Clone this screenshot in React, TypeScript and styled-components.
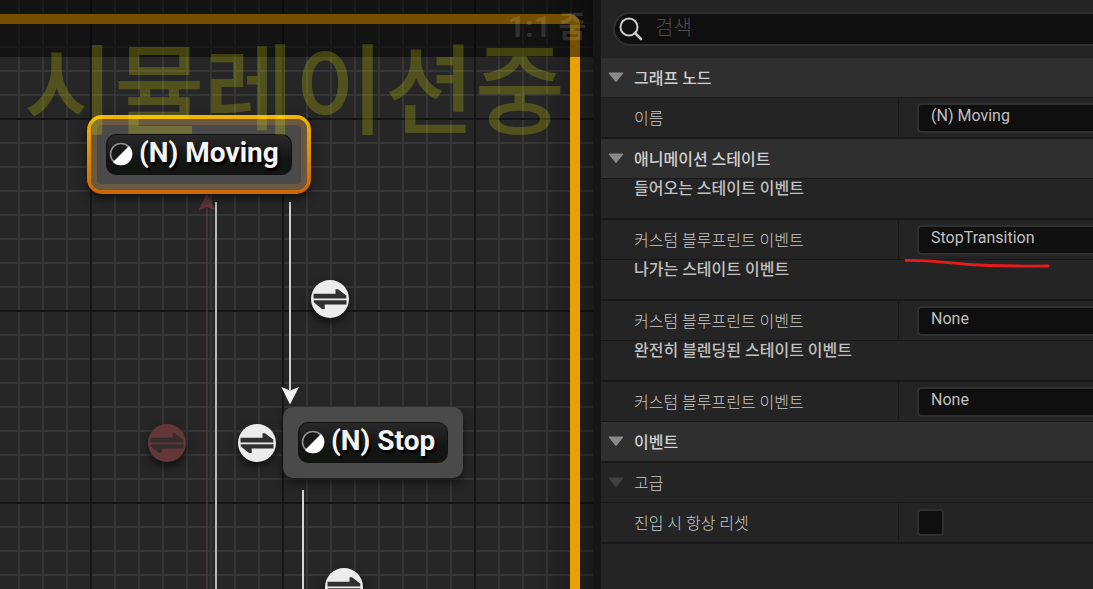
import React, { useState } from "react";
import styled, { createGlobalStyle, css } from "styled-components";

const GlobalStyle = createGlobalStyle`
  *, *::before, *::after { box-sizing: border-box; }
  body {
    margin: 0;
    background: #242424;
    color: #c0c0c0;
    font-family: Roboto, "Noto Sans CJK KR", sans-serif;
    font-size: 16px;
    overflow: hidden;
  }
  button, input { font: inherit; color: inherit; }
`;

const Editor = styled.div`
  display: grid;
  grid-template-columns: minmax(0, 593fr) 8px minmax(0, 492fr);
  height: 100vh;
`;

const Splitter = styled.div`
  background: #161616;
`;

/* ---------- Graph ---------- */

const Graph = styled.main`
  position: relative;
  overflow: hidden;
  background-color: #262626;
  background-image:
    linear-gradient(to left, rgba(0, 0, 0, 0.3), transparent 60px),
    linear-gradient(90deg, #161616 2px, transparent 2px),
    linear-gradient(#161616 2px, transparent 2px),
    linear-gradient(90deg, #353535 2px, transparent 2px),
    linear-gradient(#353535 2px, transparent 2px);
  background-size: 100% 100%, 192px 192px, 192px 192px, 24px 24px, 24px 24px;
  background-position: 0 0, 90px 0, 0 118px, 18px 0, 0 22px;
`;

const SimulationFrame = styled.div`
  position: absolute;
  inset: 14px 13px -20px -20px;
  border: 10px solid #eba000;
  border-radius: 10px;
`;

const TitleShade = styled.header`
  position: absolute;
  inset: 0 0 auto 0;
  height: 57px;
  padding: 7px 7px;
  background: rgba(0, 0, 0, 0.5);
  text-align: right;
`;

const ZoomLabel = styled.span`
  font: 700 30px/40px Roboto, "Noto Sans CJK KR", sans-serif;
  color: rgba(255, 255, 255, 0.14);
`;

const SimulationLabel = styled.div`
  position: absolute;
  top: 28px;
  right: 28px;
  font: 500 98px/110px "Noto Sans CJK KR", sans-serif;
  color: rgba(255, 255, 0, 0.2);
  white-space: nowrap;
  pointer-events: none;
`;

const Wires = styled.svg`
  position: absolute;
  inset: 0;
  width: 100%;
  height: 100%;
`;

const NodeShell = styled.div<{ $x: number; $y: number; $selected?: boolean }>`
  position: absolute;
  left: ${(p) => p.$x}px;
  top: ${(p) => p.$y}px;
  border-radius: 10px;
  box-shadow: 0 5px 10px rgba(0, 0, 0, 0.5);
  ${(p) =>
    p.$selected &&
    css`
      padding: 4px;
      border-radius: 15px;
      background: linear-gradient(#f3b400, #cc6600);
    `}
`;

const NodeBody = styled.div<{ $selected?: boolean }>`
  padding: 15px;
  border-radius: 10px;
  background: #4a4a4a;
  ${(p) => p.$selected && css`box-shadow: inset 0 0 0 6px #6a5840;`}
`;

const NodeTitle = styled.div`
  display: flex;
  align-items: center;
  gap: 6px;
  height: 41px;
  padding: 0 12px 0 2px;
  border-radius: 10px;
  border: 1px solid #121212;
  background: linear-gradient(#282828, #141614 60%, #121412);
  color: #f4f4f4;
  font: 700 28px/36px Roboto, sans-serif;
  text-shadow: 2px 3px 2px #000;
  white-space: nowrap;

  span { padding-bottom: 4px; }
  svg { margin-bottom: 2px; }
`;

const TransitionButton = styled.button<{ $x: number; $y: number; $muted?: boolean }>`
  position: absolute;
  left: ${(p) => p.$x}px;
  top: ${(p) => p.$y}px;
  width: 38px;
  height: 38px;
  padding: 0;
  border: 0;
  border-radius: 50%;
  background: ${(p) => (p.$muted ? "#643838" : "#ececec")};
  color: ${(p) => (p.$muted ? "#352d2d" : "#303030")};
  box-shadow: 0 5px 9px rgba(0, 0, 0, 0.55);

  svg { display: block; }
`;

/* ---------- Details ---------- */

const Details = styled.aside`
  overflow: hidden;
  background: #242424;
`;

const SearchBar = styled.div`
  height: 58px;
  padding: 12px 0 0 12px;
`;

const SearchBox = styled.label`
  display: flex;
  align-items: center;
  gap: 12px;
  height: 34px;
  margin-right: -20px;
  padding-left: 4px;
  border: 2px solid #303030;
  border-radius: 17px;
  background: #0f0f0f;
`;

const SearchInput = styled.input`
  flex: 1;
  min-width: 0;
  height: 28px;
  padding: 0 0 2px;
  border: 0;
  outline: 0;
  background: none;
  font-size: 20px;
  font-weight: 300;
  &::placeholder { color: #4c4c4c; opacity: 1; }
`;

const SectionHeader = styled.button<{ $thick?: boolean; $sub?: boolean }>`
  display: flex;
  align-items: center;
  gap: 10px;
  width: 100%;
  height: ${(p) => (p.$thick ? 41 : 40)}px;
  padding: 0 0 2px 7px;
  border: 0;
  border-bottom: ${(p) => (p.$thick ? 2 : 1)}px solid #191919;
  background: ${(p) => (p.$sub ? "#242424" : "#2f2f2f")};
  color: ${(p) => (p.$sub ? "#c8c8c8" : "#d0d0d0")};
  font-weight: ${(p) => (p.$sub ? 300 : 500)};
  text-align: left;

  svg { width: 16px; color: ${(p) => (p.$sub ? "#404040" : "#8a8a8a")}; }
`;

const GroupTitle = styled.h3`
  height: 41px;
  margin: 0;
  padding-left: 33px;
  border-bottom: 2px solid #191919;
  font-size: 16px;
  font-weight: 500;
  line-height: 19px;
`;

const Row = styled.div<{ $thick?: boolean }>`
  display: grid;
  grid-template-columns: 298px minmax(0, 1fr);
  height: ${(p) => (p.$thick ? 41 : 40)}px;
  border-bottom: ${(p) => (p.$thick ? 2 : 1)}px solid #191919;
`;

const RowLabel = styled.label`
  display: flex;
  align-items: center;
  padding: 0 0 2px 33px;
  border-right: 1px solid #191919;
  color: #c8c8c8;
  font-weight: 300;
`;

const Value = styled.div`
  position: relative;
  display: flex;
  align-items: center;
  padding-left: 18px;
`;

const TextField = styled.input`
  flex: 1 0 auto;
  height: 30px;
  margin-right: -20px;
  padding: 0 12px 4px;
  border: 2px solid #303030;
  border-radius: 5px;
  outline: 0;
  background: #0f0f0f;
`;

const CheckBox = styled.input`
  appearance: none;
  width: 27px;
  height: 27px;
  margin: 0;
  border: 2px solid #303030;
  border-radius: 4px;
  background: #0f0f0f;
  &:checked { background: #2672d8; }
`;

const Underline = styled.svg`
  position: absolute;
  left: 4px;
  top: 36px;
  z-index: 1;
  pointer-events: none;
`;

const StateIcon = () => (
  <svg width="24" height="24" viewBox="0 0 24 24" aria-hidden="true">
    <circle cx="12" cy="12" r="10.5" fill="#171817" stroke="#8f8f8f" strokeWidth="1.6" />
    <path d="M20 4A11.3 11.3 0 0 1 4 20Z" fill="#fff" />
  </svg>
);

const SwapIcon = () => (
  <svg width="38" height="38" viewBox="-19 -19 38 38" fill="currentColor" aria-hidden="true">
    <path d="M-16.5-5.2H5.5V-9.8H8L16.3-3.5V-.6H-16.5Z" />
    <path d="M16.5 5.6H-5.3V10H-8L-16.3 3.3V1.2H16.5Z" />
  </svg>
);

const Triangle = () => (
  <svg width="15" height="10" viewBox="0 0 15 10" aria-hidden="true">
    <path d="M1 .5H14Q15.4.6 14.4 1.8L8.4 9.2Q7.5 10.2 6.6 9.2L.6 1.8Q-.4.6 1 .5Z" fill="currentColor" />
  </svg>
);

const SearchIcon = () => (
  <svg width="24" height="24" viewBox="0 0 24 24" fill="none" stroke="#cacaca" aria-hidden="true">
    <circle cx="10" cy="10" r="8.5" strokeWidth="2" />
    <path d="M16 16L22 22" strokeWidth="2.6" strokeLinecap="round" />
  </svg>
);

function StateNode({ x, y, title, selected }: { x: number; y: number; title: string; selected?: boolean }) {
  return (
    <NodeShell $x={x} $y={y} $selected={selected}>
      <NodeBody $selected={selected}>
        <NodeTitle>
          <StateIcon />
          <span>{title}</span>
        </NodeTitle>
      </NodeBody>
    </NodeShell>
  );
}

function Transition(props: { x: number; y: number; muted?: boolean }) {
  return (
    <TransitionButton type="button" aria-label="트랜지션" $x={props.x} $y={props.y} $muted={props.muted}>
      <SwapIcon />
    </TransitionButton>
  );
}

function TextRow(props: { id: string; label: string; value: string; thick?: boolean; marked?: boolean }) {
  const [value, setValue] = useState(props.value);
  return (
    <Row $thick={props.thick}>
      <RowLabel htmlFor={props.id}>{props.label}</RowLabel>
      <Value>
        <TextField id={props.id} value={value} onChange={(e) => setValue(e.target.value)} />
        {props.marked && (
          <Underline width="150" height="14" viewBox="0 0 150 14" aria-hidden="true">
            <path d="M3 4.5C25 4 40 6.5 66 8.5S115 10 145 10" fill="none" stroke="#e61c1c" strokeWidth="2.8" strokeLinecap="round" />
          </Underline>
        )}
      </Value>
    </Row>
  );
}

function Section(props: { title: string; thick?: boolean; sub?: boolean }) {
  return (
    <SectionHeader type="button" aria-expanded="true" $thick={props.thick} $sub={props.sub}>
      <Triangle />
      {props.title}
    </SectionHeader>
  );
}

export default function App() {
  return (
    <>
      <GlobalStyle />
      <Editor>
        <Graph>
          <SimulationFrame />
          <Wires aria-hidden="true">
            <g fill="#733a3a" opacity="0.75">
              <rect x="206" y="208" width="2" height="2000" opacity="0.7" />
              <path d="M207 193L215.5 210.5L207 207L198.5 210.5Z" />
            </g>
            <rect x="215" y="202" width="2" height="2000" fill="#b9b9b9" />
            <rect x="289" y="202" width="2" height="188" fill="#cfcfcf" />
            <path d="M290 404.5L281.3 387L290 390.5L299 387Z" fill="#f0f0f0" />
            <rect x="302" y="490" width="2" height="2000" fill="#d4d4d4" />
          </Wires>
          <StateNode x={87} y={115} title="(N) Moving" selected />
          <StateNode x={283} y={407} title="(N) Stop" />
          <Transition x={311} y={280} />
          <Transition x={148} y={424} muted />
          <Transition x={238} y={424} />
          <Transition x={325} y={568} />
          <TitleShade>
            <ZoomLabel>1:1 줌</ZoomLabel>
          </TitleShade>
          <SimulationLabel>시뮬레이션중</SimulationLabel>
        </Graph>
        <Splitter />
        <Details>
          <SearchBar>
            <SearchBox>
              <SearchIcon />
              <SearchInput type="text" placeholder="검색" aria-label="검색" />
            </SearchBox>
          </SearchBar>
          <Section title="그래프 노드" />
          <TextRow id="name" label="이름" value="(N) Moving" thick />
          <Section title="애니메이션 스테이트" />
          <GroupTitle>들어오는 스테이트 이벤트</GroupTitle>
          <TextRow id="entered" label="커스텀 블루프린트 이벤트" value="StopTransition" marked />
          <GroupTitle>나가는 스테이트 이벤트</GroupTitle>
          <TextRow id="left" label="커스텀 블루프린트 이벤트" value="None" />
          <GroupTitle>완전히 블렌딩된 스테이트 이벤트</GroupTitle>
          <TextRow id="blended" label="커스텀 블루프린트 이벤트" value="None" />
          <Section title="이벤트" thick />
          <Section title="고급" sub />
          <Row $thick>
            <RowLabel htmlFor="reset">진입 시 항상 리셋</RowLabel>
            <Value>
              <CheckBox id="reset" type="checkbox" />
            </Value>
          </Row>
        </Details>
      </Editor>
    </>
  );
}
